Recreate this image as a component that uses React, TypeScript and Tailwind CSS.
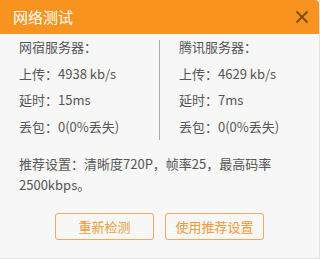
export default function App() {
  const font = { fontFamily: '"Microsoft YaHei", "Noto Sans CJK SC", sans-serif' }
  return (
    <div
      className="w-[320px] h-[259px] bg-[#f7f7f7] border-r border-b border-[#e2e2e2] flex flex-col text-[13px] text-[#555]"
      style={font}
    >
      <div className="h-[34px] bg-[#f7931e] rounded-tr-[4px] flex items-center justify-between pl-[13px] pr-[10px]">
        <span className="text-white text-[15px]">网络测试</span>
        <svg width="14" height="14" viewBox="0 0 14 14" className="text-[#7d4a12]">
          <path d="M1.5 1.5 L12.5 12.5 M12.5 1.5 L1.5 12.5" stroke="currentColor" strokeWidth="1.8" />
        </svg>
      </div>

      <div className="flex">
        <div className="w-[159px] pl-[19px] flex flex-col">
          <div className="leading-[26.5px]">网宿服务器：</div>
          <div className="leading-[26.5px]">上传：4938 kb/s</div>
          <div className="leading-[26.5px]">延时：15ms</div>
          <div className="leading-[26.5px]">丢包：0(0%丢失)</div>
        </div>
        <div className="w-px bg-[#a9a9a9] mt-[6px]" />
        <div className="flex-1 pl-[19px] flex flex-col">
          <div className="leading-[26.5px]">腾讯服务器：</div>
          <div className="leading-[26.5px]">上传：4629 kb/s</div>
          <div className="leading-[26.5px]">延时：7ms</div>
          <div className="leading-[26.5px]">丢包：0(0%丢失)</div>
        </div>
      </div>

      <div className="pl-[19px] pt-[13px] leading-[21px]">
        推荐设置：清晰度720P，帧率25，最高码率
        <br />
        2500kbps。
      </div>

      <div className="flex justify-center gap-[11px] mt-[18px]">
        <button className="w-[99px] h-[27px] border border-[#f0a95a] rounded-[3px] text-[#f09a35] text-[13px]">
          重新检测
        </button>
        <button className="w-[99px] h-[27px] border border-[#f0a95a] rounded-[3px] text-[#f09a35] text-[13px]">
          使用推荐设置
        </button>
      </div>
    </div>
  )
}
